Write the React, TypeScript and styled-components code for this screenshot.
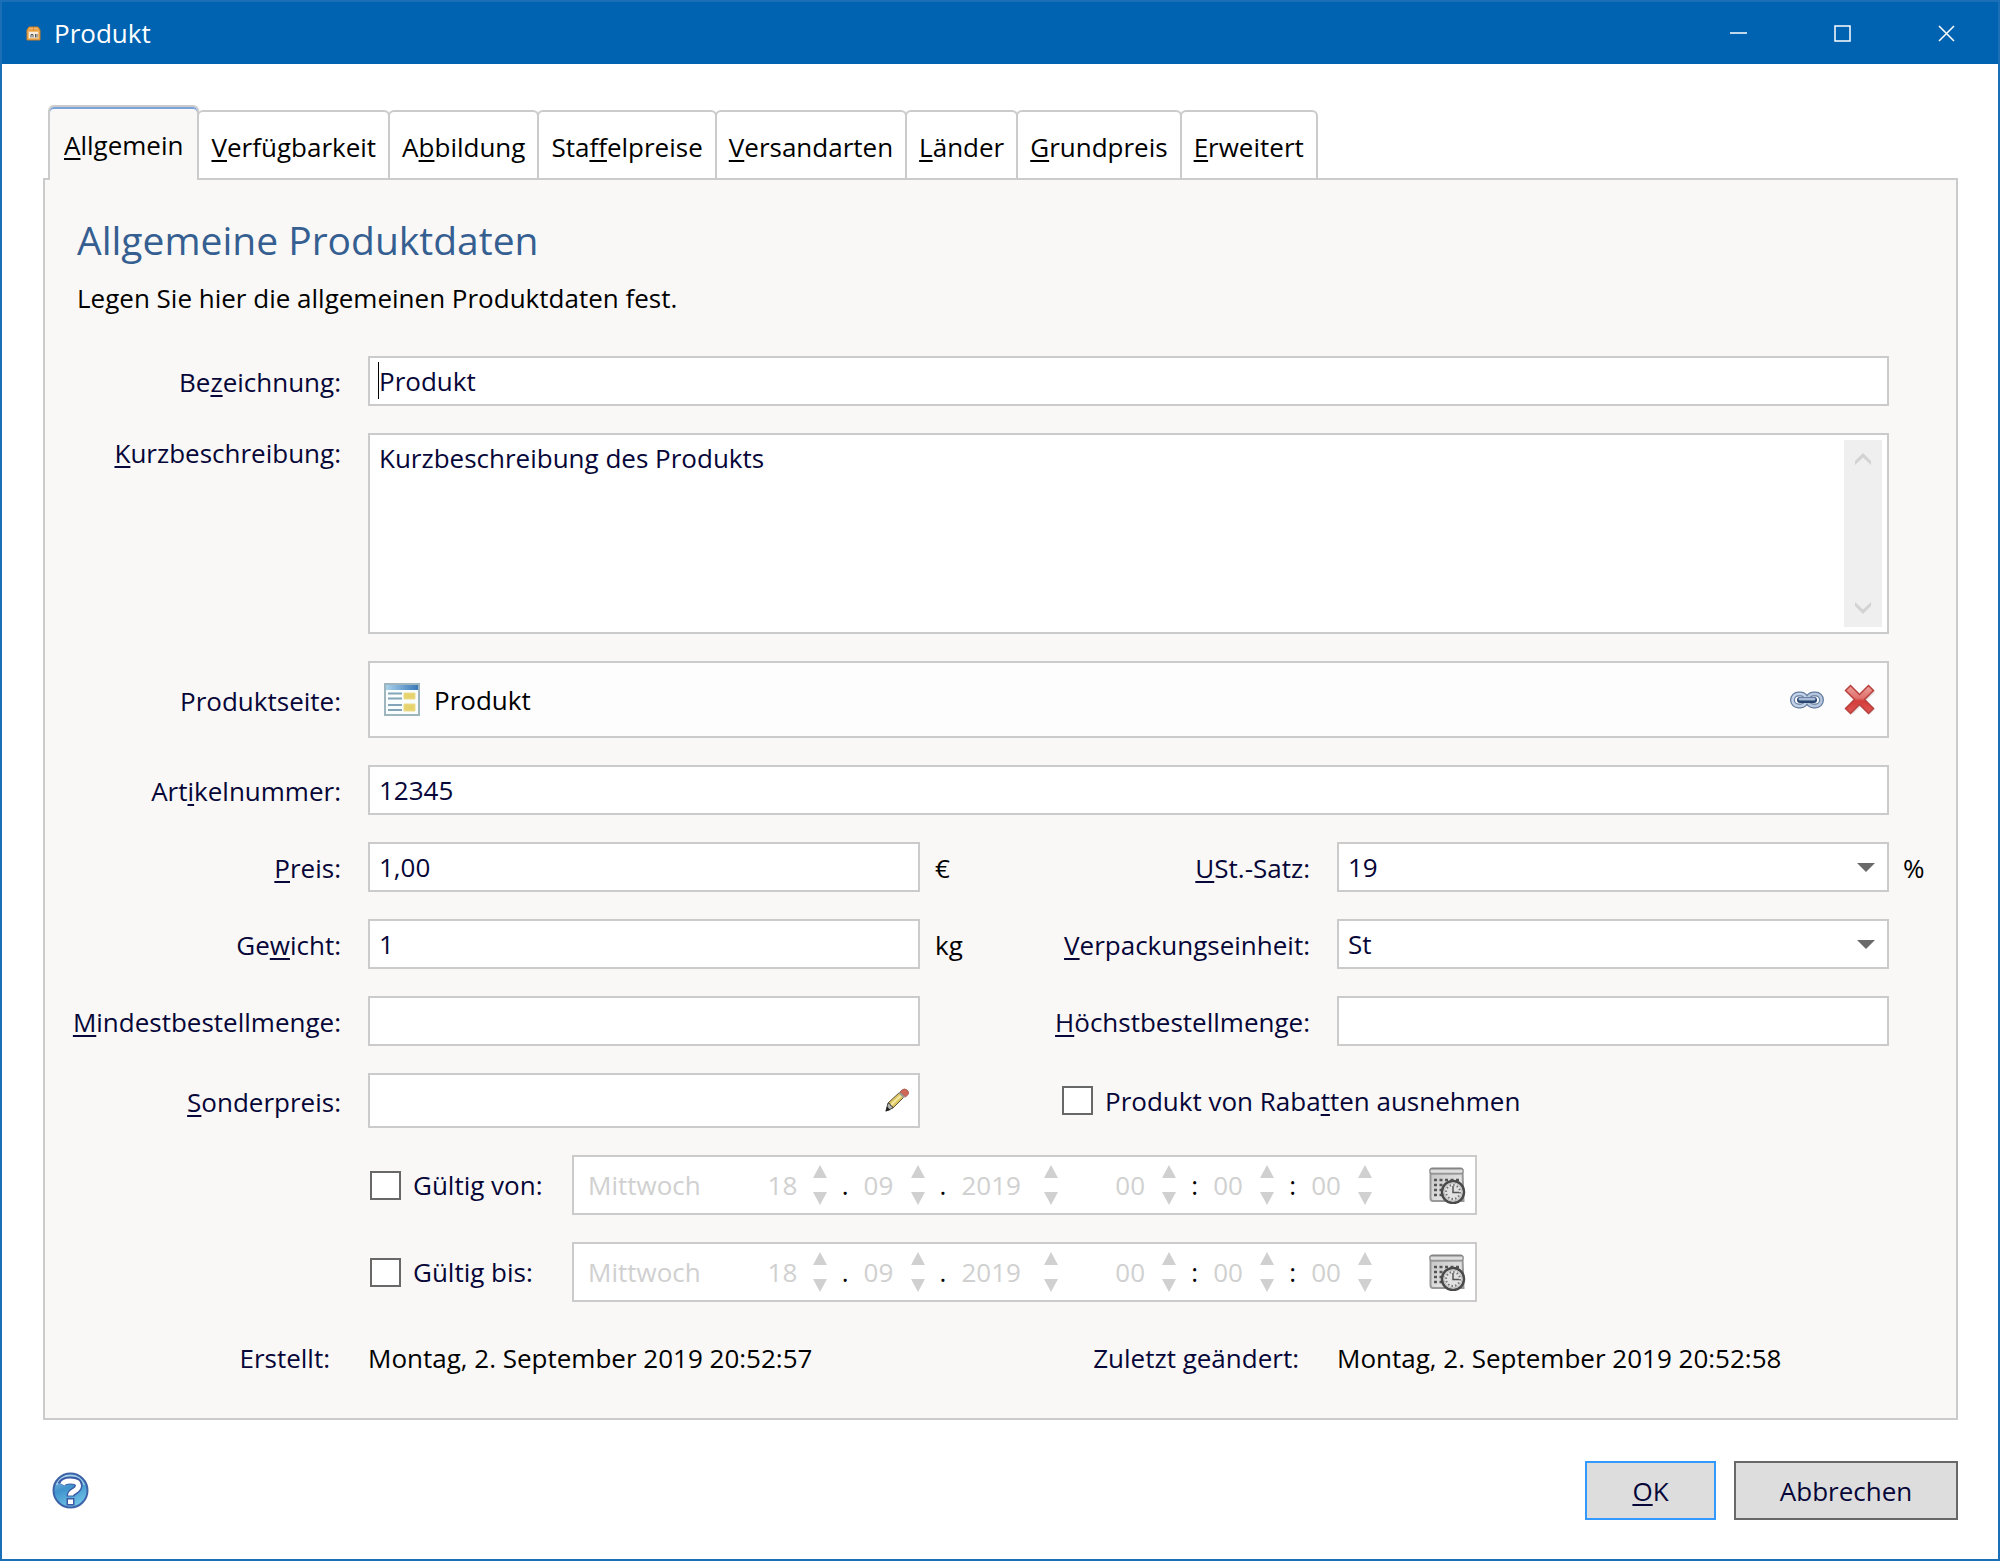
import React from "react";
import styled, { createGlobalStyle, css } from "styled-components";

const color = {
  accent: "#0063b1",
  border: "#cbcbcb",
  panel: "#f9f8f6",
  ink: "#000",
  label: "#060638",
  heading: "#365f91",
  disabled: "#d0d0d0",
  dark: "#686868",
};

const GlobalStyle = createGlobalStyle`
  *, *::before, *::after { box-sizing: border-box; }
  body { margin: 0; background: #fff; }
  body, button, input, select, textarea {
    font-family: "Open Sans", "Noto Sans", sans-serif;
    font-size: 26px;
    line-height: 36px;
    color: ${color.label};
  }
  button { cursor: pointer; }
  u { text-decoration-thickness: 2px; text-underline-offset: 3px; text-decoration-skip-ink: none; }
`;

const Window = styled.div`
  display: flex;
  flex-direction: column;
  min-height: 100vh;
  border: 2px solid #1a6fb6;
`;

const TitleBar = styled.header`
  display: flex;
  align-items: center;
  height: 62px;
  padding-left: 24px;
  background: ${color.accent};
  color: #fff;
`;

const Title = styled.h1`
  flex: 1;
  margin: 0 0 0 13px;
  font-size: 26px;
  font-weight: 400;
`;

const CaptionButton = styled.button`
  display: flex;
  align-items: center;
  justify-content: center;
  width: 104px;
  height: 62px;
  padding: 0;
  border: 0;
  background: none;
`;

const Body = styled.main`
  flex: 1;
  padding: 41px 40px 39px 41px;
`;

const TabList = styled.div`
  display: flex;
  align-items: flex-end;
  padding-left: 5px;
`;

const Tab = styled.button<{ $active: boolean }>`
  height: 68px;
  margin-left: -2px;
  padding: 3px 12px 0;
  border: 2px solid ${color.border};
  border-bottom: 0;
  border-radius: 6px 6px 0 0;
  background: #fff;
  color: ${color.ink};
  white-space: nowrap;
  ${({ $active }) =>
    $active &&
    css`
      z-index: 1;
      height: 75px;
      margin: 0 0 -2px;
      padding: 3px 14px 0;
      background: ${color.panel};
      box-shadow: inset 0 2px #79a3da;
    `}
`;

const Panel = styled.section`
  padding: 32px 0 42px 32px;
  border: 2px solid ${color.border};
  background: ${color.panel};
`;

const Heading = styled.h2`
  margin: 0 0 12px;
  font-size: 39px;
  line-height: 56px;
  font-weight: 400;
  color: ${color.heading};
`;

const Intro = styled.p`
  margin: 0 0 40px;
  color: ${color.ink};
`;

const Form = styled.form`
  display: grid;
  grid-template-columns: 291px minmax(0, 1fr) 417px minmax(0, 1fr) 67px;
  row-gap: 27px;
  align-items: center;
`;

const Label = styled.label<{ $top?: boolean }>`
  justify-self: end;
  align-self: ${({ $top }) => ($top ? "start" : "center")};
  padding: 2px 27px 0 0;
  white-space: nowrap;
`;

const Middle = styled.div`
  display: flex;
  justify-content: space-between;
  padding-left: 15px;
`;

const Unit = styled.span`
  padding-top: 2px;
  color: ${color.ink};
`;

const EndUnit = styled(Unit)`
  padding-left: 14px;
`;

const frame = css`
  border: 2px solid ${color.border};
  border-radius: 0;
  background: #fff;
  outline: none;
`;

const wide = css`
  grid-column: 2 / -1;
  margin-right: 67px;
`;

const Field = styled.div<{ $wide?: boolean }>`
  position: relative;
  ${({ $wide }) => $wide && wide}
`;

const TextInput = styled.input<{ $tall?: boolean }>`
  ${frame}
  display: block;
  width: 100%;
  height: ${({ $tall }) => ($tall ? 55 : 50)}px;
  padding: 0 9px;
`;

const Caret = styled.span`
  position: absolute;
  top: 6px;
  left: 10px;
  width: 1px;
  height: 37px;
  background: #000;
`;

const Select = styled.select`
  ${frame}
  display: block;
  width: 100%;
  height: 50px;
  padding: 0 40px 0 9px;
  appearance: none;
`;

const SelectArrow = styled.svg`
  position: absolute;
  top: 21px;
  right: 14px;
  pointer-events: none;
`;

const AreaFrame = styled.div`
  ${frame}
  ${wide}
  display: flex;
  height: 201px;
  padding: 5px 5px 5px 9px;
`;

const TextArea = styled.textarea`
  flex: 1;
  padding: 0;
  border: 0;
  background: none;
  outline: none;
  resize: none;
  overflow: hidden;
`;

const ScrollBar = styled.div`
  display: flex;
  flex-direction: column;
  justify-content: space-between;
  width: 38px;
  background: #efefef;
`;

const IconButton = styled.button`
  display: flex;
  align-items: center;
  justify-content: center;
  padding: 0;
  border: 0;
  background: none;
`;

const ScrollButton = styled(IconButton)`
  height: 38px;
`;

const PageFrame = styled.div`
  ${frame}
  ${wide}
  display: flex;
  align-items: center;
  gap: 20px;
  height: 77px;
  padding: 0 11px 0 14px;
  background: #fdfdfd;
`;

const PageName = styled.output`
  flex: 1;
  margin-left: -6px;
  color: ${color.ink};
`;

const PencilButton = styled(IconButton)`
  position: absolute;
  top: 15px;
  right: 11px;
`;

const CheckLabel = styled.label`
  display: flex;
  align-items: center;
  gap: 12px;
  white-space: nowrap;
`;

const DiscountCheck = styled(CheckLabel)`
  grid-column: 3 / -1;
  padding-left: 142px;
`;

const CheckBox = styled.input`
  appearance: none;
  width: 31px;
  height: 29px;
  margin: 0;
  border: 2px solid ${color.dark};
  background: #fff;
`;

const ValidityRow = styled.div`
  grid-column: 2 / -1;
  display: flex;
  align-items: center;
`;

const ValidityCheck = styled(CheckLabel)`
  width: 204px;
  padding-left: 2px;
`;

const DateBox = styled.div`
  ${frame}
  display: flex;
  align-items: center;
  height: 60px;
  width: 905px;
  padding: 0 9px 0 14px;
`;

const Weekday = styled.span`
  width: 180px;
  color: ${color.disabled};
`;

const Part = styled.input<{ $w: number }>`
  width: ${({ $w }) => $w}px;
  padding: 0;
  border: 0;
  background: none;
  color: ${color.disabled};
`;

const Spinner = styled.span`
  display: flex;
  flex-direction: column;
  gap: 14px;
`;

const SpinButton = styled(IconButton)`
  width: 14px;
  height: 13px;
`;

const Separator = styled.span<{ $w: number }>`
  width: ${({ $w }) => $w}px;
  text-align: center;
  color: ${color.ink};
`;

const MetaRow = styled.div`
  grid-column: 1 / -1;
  display: grid;
  grid-template-columns: subgrid;
  padding-top: 11px;
`;

const MetaLabel = styled.span`
  padding-right: 38px;
  text-align: right;
`;

const MetaValue = styled.span`
  color: ${color.ink};
  white-space: nowrap;
`;

const Footer = styled.footer`
  display: flex;
  align-items: center;
  gap: 18px;
  padding-top: 41px;
`;

const HelpButton = styled(IconButton)`
  margin: 0 auto 0 9px;
`;

const DialogButton = styled.button<{ $primary?: boolean }>`
  min-width: ${({ $primary }) => ($primary ? 131 : 224)}px;
  height: 59px;
  padding: 0 16px;
  border: 2px solid ${({ $primary }) => ($primary ? "#3399ff" : color.dark)};
  background: #ddd;
`;

/** Renders a caption with its access key underlined. */
function Hot({ text, at }: { text: string; at: number }) {
  return (
    <span>
      {text.slice(0, at)}
      <u>{text[at]}</u>
      {text.slice(at + 1)}
    </span>
  );
}

const PackageIcon = () => (
  <svg width="15" height="15" viewBox="0 0 15 15" aria-hidden="true">
    <path d="M3 1h9l2 3v10H1V4z" fill="#f0b868" stroke="#c67a24" />
    <path d="M1.500 4h12M7.500 1v4" stroke="#d98d35" />
    <rect x="3" y="6" width="9" height="6" fill="#f4ecdf" />
    <path d="M5 11.500V8.500h2v3M9.500 8v3.500M11 8v3.500" stroke="#555" fill="none" />
  </svg>
);

const PageIcon = () => (
  <svg width="36" height="33" viewBox="0 0 36 33" aria-hidden="true">
    <defs>
      <linearGradient id="pageBar">
        <stop offset="0" stopColor="#a9d2ea" />
        <stop offset="1" stopColor="#3a78b8" />
      </linearGradient>
    </defs>
    <rect x="1" y="1" width="34" height="31" fill="#fafdfe" stroke="#9fb5bd" strokeWidth="2" />
    <rect x="2" y="2" width="32" height="5" fill="url(#pageBar)" />
    <path d="M4 10.500h14M4 15.500h14M4 22h14M4 27h14" stroke="#84a5b8" strokeWidth="2" />
    <path d="M20 10h11v6H20zM20 21h11v7H20z" fill="#e6d36e" stroke="#eddc8c" />
  </svg>
);

const LinkIcon = () => (
  <svg width="34" height="18" viewBox="0 0 34 18" aria-hidden="true">
    <g fill="none">
      <rect x="2.500" y="3" width="14" height="12" rx="6" stroke="#637c9f" strokeWidth="5" />
      <rect x="17.500" y="3" width="14" height="12" rx="6" stroke="#637c9f" strokeWidth="5" />
      <rect x="2.500" y="3" width="14" height="12" rx="6" stroke="#c3d2e6" strokeWidth="2.500" />
      <rect x="17.500" y="3" width="14" height="12" rx="6" stroke="#b5c6dd" strokeWidth="2.500" />
      <path d="M10 9h14" stroke="#27456f" strokeWidth="6" strokeLinecap="round" />
      <path d="M10 8h14" stroke="#a9bdd8" strokeWidth="3" strokeLinecap="round" />
    </g>
  </svg>
);

const DeleteIcon = () => (
  <svg width="32" height="32" viewBox="0 0 32 32" aria-hidden="true">
    <defs>
      <linearGradient id="cross" x2="0" y2="1">
        <stop offset="0" stopColor="#eda09c" />
        <stop offset=".45" stopColor="#e0706c" />
        <stop offset=".55" stopColor="#d43d3b" />
        <stop offset="1" stopColor="#dd5654" />
      </linearGradient>
    </defs>
    <path d="M8 3l9 8.500L26 3l5 5-8.500 8.500L31 25l-5 5.500-9-8.500-9 8.500L3 25l8.500-8.500L3 8z" fill="#ccc" opacity=".6" />
    <path
      d="M6.500 1.500l9 9 9-9 5 5-9 9 9 9-5 5-9-9-9 9-5-5 9-9-9-9z"
      fill="url(#cross)"
      stroke="#b8413e"
      strokeWidth="1.500"
    />
  </svg>
);

const PencilIcon = () => (
  <svg width="24" height="24" viewBox="0 0 24 24" aria-hidden="true">
    <path d="M3 15L15 4l4.500 4.500L8 20z" fill="#dcc662" stroke="#5e5030" />
    <path d="M6 17L17 6.500" stroke="#f3e8a4" strokeWidth="2" />
    <path d="M17 2q2.500-2 5 0t1 4.500L20.500 9 15 4z" fill="#d0695a" stroke="#a85c50" />
    <path d="M14 4.500l5.500 5" stroke="#9d9d94" strokeWidth="2" />
    <path d="M1 23l2-8q2.500 0 2.500 2.500Q8 18 8 20z" fill="#b5b5b0" stroke="#444" />
    <path d="M0.500 23.500l1.500-5L5.500 22z" fill="#222" />
  </svg>
);

const CalendarIcon = () => (
  <svg width="37" height="37" viewBox="0 0 37 37" aria-hidden="true">
    <defs>
      <linearGradient id="calPage" x2="1" y2="1">
        <stop offset="0" stopColor="#c4c4c4" />
        <stop offset="1" stopColor="#f2f2f2" />
      </linearGradient>
      <linearGradient id="calTop" x2="0" y2="1">
        <stop offset="0" stopColor="#777" />
        <stop offset=".5" stopColor="#eee" />
        <stop offset="1" stopColor="#a5a5a5" />
      </linearGradient>
    </defs>
    <path d="M1.500 3h32l1 31H4q-2.500 0-2.500-3z" fill="url(#calPage)" stroke="#999" strokeWidth="2" />
    <rect x="1" y="1" width="33" height="6" rx="2" fill="url(#calTop)" stroke="#808080" />
    <path d="M5 13h26M5 18h10M5 23h8M5 28h8" stroke="#555" strokeWidth="2.500" strokeDasharray="3 2.500" />
    <circle cx="24" cy="25" r="11" fill="#e2e2e2" stroke="#4a4a4a" strokeWidth="2.500" />
    <circle cx="24" cy="25" r="9" fill="none" stroke="#bbb" />
    <circle cx="24" cy="25" r="7" fill="none" stroke="#777" strokeWidth="2" strokeDasharray="1.500 2.165" />
    <path d="M24 19v6.500h6" fill="none" stroke="#555" strokeWidth="1.500" />
  </svg>
);

const HelpIcon = () => (
  <svg width="37" height="37" viewBox="0 0 37 37" aria-hidden="true">
    <defs>
      <linearGradient id="help" x2=".4" y2="1">
        <stop offset="0" stopColor="#9fcde6" />
        <stop offset=".5" stopColor="#3f93cc" />
        <stop offset="1" stopColor="#6cc0e4" />
      </linearGradient>
    </defs>
    <circle cx="18.500" cy="18.500" r="17" fill="url(#help)" stroke="#3d62a8" strokeWidth="2" />
    <path d="M4.500 13q4-9.500 14-9.500t14 9.500" fill="none" stroke="#bfe0f0" strokeWidth="1.500" opacity=".7" />
    <g fill="none">
      <path d="M9.500 12.500q1.500-4 8.500-4 8.500 0 8.500 5 0 3-4 5.500-4 2-4 5.500" stroke="#3c5aa6" strokeWidth="8" />
      <path d="M18.500 26v7.500" stroke="#3c5aa6" strokeWidth="8" />
      <path d="M10.500 12.500q1.500-3.500 7.500-3.500 8.500 0 8.500 4.500 0 3-4 5.500-4 2-4 4.500" stroke="#fff" strokeWidth="5" />
      <path d="M18.500 27.500v4.500" stroke="#fff" strokeWidth="5" />
    </g>
  </svg>
);

const Triangle = ({ down }: { down?: boolean }) => (
  <svg width="14" height="13" viewBox="0 0 14 13" aria-hidden="true">
    <path d={down ? "M0 0h14L7 13z" : "M0 13h14L7 0z"} fill={color.disabled} />
  </svg>
);

const Chevron = ({ down }: { down?: boolean }) => (
  <svg width="16" height="12" viewBox="0 0 16 12" aria-hidden="true">
    <path d={down ? "M0 0l8 7.500L16 0v4l-8 8-8-8z" : "M0 12l8-7.500L16 12V8L8 0 0 8z"} fill="#d3d3d3" />
  </svg>
);

const CAPTION_ICONS: [string, string][] = [
  ["Minimieren", "M0 8h17"],
  ["Maximieren", "M1 1h15v15H1z"],
  ["Schließen", "M1 1l15 15M16 1L1 16"],
];

const TABS: [string, number][] = [
  ["Allgemein", 0],
  ["Verfügbarkeit", 0],
  ["Abbildung", 1],
  ["Staffelpreise", 3],
  ["Versandarten", 0],
  ["Länder", 0],
  ["Grundpreis", 0],
  ["Erweitert", 0],
];

const DATE_PARTS = [
  { name: "Tag", value: "18", width: 45, sep: ".", sepWidth: 37 },
  { name: "Monat", value: "09", width: 47, sep: ".", sepWidth: 37 },
  { name: "Jahr", value: "2019", width: 83, sep: "", sepWidth: 57 },
  { name: "Stunde", value: "00", width: 47, sep: ":", sepWidth: 37 },
  { name: "Minute", value: "00", width: 47, sep: ":", sepWidth: 37 },
  { name: "Sekunde", value: "00", width: 47, sep: "", sepWidth: 57 },
];

function Dropdown({ id, value }: { id: string; value: string }) {
  return (
    <Field>
      <Select id={id} defaultValue={value}>
        <option>{value}</option>
      </Select>
      <SelectArrow width="18" height="9" viewBox="0 0 18 9" aria-hidden="true">
        <path d="M0 0h18L9 9z" fill="#6a6a6a" />
      </SelectArrow>
    </Field>
  );
}

function Validity({ text }: { text: string }) {
  return (
    <ValidityRow>
      <ValidityCheck>
        <CheckBox type="checkbox" />
        {text}
      </ValidityCheck>
      <DateBox role="group" aria-label={text}>
        <Weekday>Mittwoch</Weekday>
        {DATE_PARTS.map((p) => (
          <React.Fragment key={p.name}>
            <Part $w={p.width} aria-label={p.name} defaultValue={p.value} disabled />
            <Spinner>
              <SpinButton type="button" disabled aria-label={`${p.name} erhöhen`}>
                <Triangle />
              </SpinButton>
              <SpinButton type="button" disabled aria-label={`${p.name} verringern`}>
                <Triangle down />
              </SpinButton>
            </Spinner>
            <Separator $w={p.sepWidth}>{p.sep}</Separator>
          </React.Fragment>
        ))}
        <IconButton type="button" aria-label="Kalender">
          <CalendarIcon />
        </IconButton>
      </DateBox>
    </ValidityRow>
  );
}

export default function App() {
  return (
    <>
      <GlobalStyle />
      <Window>
        <TitleBar>
          <PackageIcon />
          <Title>Produkt</Title>
          {CAPTION_ICONS.map(([name, d]) => (
            <CaptionButton key={name} type="button" aria-label={name}>
              <svg width="17" height="17" viewBox="0 0 17 17" aria-hidden="true">
                <path d={d} fill="none" stroke="#fff" strokeWidth="1.500" />
              </svg>
            </CaptionButton>
          ))}
        </TitleBar>
        <Body>
          <TabList role="tablist">
            {TABS.map(([text, at], i) => (
              <Tab key={text} type="button" role="tab" aria-selected={i === 0} $active={i === 0}>
                <Hot text={text} at={at} />
              </Tab>
            ))}
          </TabList>
          <Panel>
            <Heading>Allgemeine Produktdaten</Heading>
            <Intro>Legen Sie hier die allgemeinen Produktdaten fest.</Intro>
            <Form>
              <Label htmlFor="name"><Hot text="Bezeichnung:" at={2} /></Label>
              <Field $wide>
                <TextInput id="name" defaultValue="Produkt" />
                <Caret />
              </Field>

              <Label htmlFor="summary" $top><Hot text="Kurzbeschreibung:" at={0} /></Label>
              <AreaFrame>
                <TextArea id="summary" defaultValue="Kurzbeschreibung des Produkts" />
                <ScrollBar>
                  <ScrollButton type="button" aria-label="Nach oben"><Chevron /></ScrollButton>
                  <ScrollButton type="button" aria-label="Nach unten"><Chevron down /></ScrollButton>
                </ScrollBar>
              </AreaFrame>

              <Label htmlFor="page">Produktseite:</Label>
              <PageFrame>
                <PageIcon />
                <PageName id="page">Produkt</PageName>
                <IconButton type="button" aria-label="Verknüpfen"><LinkIcon /></IconButton>
                <IconButton type="button" aria-label="Entfernen"><DeleteIcon /></IconButton>
              </PageFrame>

              <Label htmlFor="sku"><Hot text="Artikelnummer:" at={3} /></Label>
              <Field $wide>
                <TextInput id="sku" defaultValue="12345" />
              </Field>

              <Label htmlFor="price"><Hot text="Preis:" at={0} /></Label>
              <TextInput id="price" defaultValue="1,00" />
              <Middle>
                <Unit>€</Unit>
                <Label htmlFor="vat"><Hot text="USt.-Satz:" at={0} /></Label>
              </Middle>
              <Dropdown id="vat" value="19" />
              <EndUnit>%</EndUnit>

              <Label htmlFor="weight"><Hot text="Gewicht:" at={2} /></Label>
              <TextInput id="weight" defaultValue="1" />
              <Middle>
                <Unit>kg</Unit>
                <Label htmlFor="pack"><Hot text="Verpackungseinheit:" at={0} /></Label>
              </Middle>
              <Dropdown id="pack" value="St" />
              <EndUnit />

              <Label htmlFor="min"><Hot text="Mindestbestellmenge:" at={0} /></Label>
              <TextInput id="min" />
              <Label htmlFor="max"><Hot text="Höchstbestellmenge:" at={0} /></Label>
              <TextInput id="max" />
              <EndUnit />

              <Label htmlFor="special"><Hot text="Sonderpreis:" at={0} /></Label>
              <Field>
                <TextInput id="special" $tall />
                <PencilButton type="button" aria-label="Bearbeiten"><PencilIcon /></PencilButton>
              </Field>
              <DiscountCheck>
                <CheckBox type="checkbox" />
                <Hot text="Produkt von Rabatten ausnehmen" at={16} />
              </DiscountCheck>

              <Validity text="Gültig von:" />
              <Validity text="Gültig bis:" />

              <MetaRow>
                <MetaLabel>Erstellt:</MetaLabel>
                <MetaValue>Montag, 2. September 2019 20:52:57</MetaValue>
                <MetaLabel>Zuletzt geändert:</MetaLabel>
                <MetaValue>Montag, 2. September 2019 20:52:58</MetaValue>
              </MetaRow>
            </Form>
          </Panel>
          <Footer>
            <HelpButton type="button" aria-label="Hilfe"><HelpIcon /></HelpButton>
            <DialogButton type="button" $primary><Hot text="OK" at={0} /></DialogButton>
            <DialogButton type="button">Abbrechen</DialogButton>
          </Footer>
        </Body>
      </Window>
    </>
  );
}
